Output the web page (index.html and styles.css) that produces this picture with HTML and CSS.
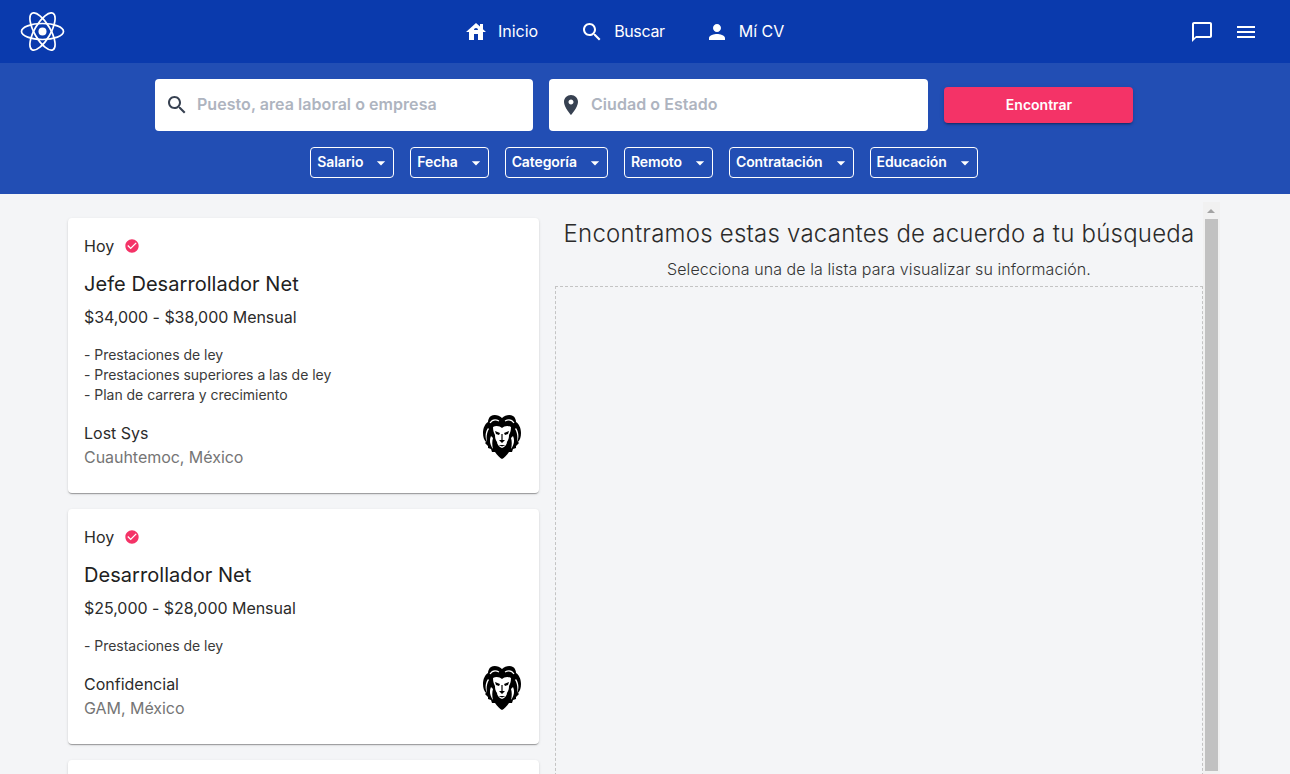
FILE: index.html
```html
<!DOCTYPE html>
<html lang="es">
<head>
<meta charset="UTF-8">
<title>Vacantes</title>
<link rel="stylesheet" href="styles.css">
</head>
<body>
<svg class="defs" width="0" height="0">
  <symbol id="lion" viewBox="0 0 38 45">
    <path fill="#000" d="M19 4C16 1 11 0 8 2 6 3 5 6 5 8 2 10 0 14 0 19c0 4 1 7 3 9l-1 1 3 3 0 2 3 1 1 3 3 0c2 3 5 6 7 7 2-1 5-4 7-7l3 0 1-3 3-1 0-2 3-3-1-1c2-2 3-5 3-9 0-5-2-9-5-11 0-2-1-5-3-6-3-2-8-1-11 2z"/>
    <path fill="#fff" d="M10 13c3-2 7-1 9 1 2-2 6-3 9-1 0 4-1 6-2 8 0 4-1 5-2 7 0 2-2 5-5 6-3-1-5-4-5-6-1-2-2-3-2-7-1-2-2-4-2-8z"/>
    <path fill="#000" d="M12 17l5 2-1 2-3-1zM26 17l-5 2 1 2 3-1zM16 26h6l-3 3zM18.400 20h1.200v6h-1.200zM15.500 31h7l-3.500 1.500z"/>
    <path fill="none" stroke="#fff" stroke-width="1.200" d="M7 9c2-3 5-4 9-2M31 9c-2-3-5-4-9-2"/>
    <path fill="#fff" d="M5 14C2 18 2 24 4 28 3 23 4 18 6 15zM33 14c3 4 3 10 1 14 1-5 0-10-2-13zM8 22c-2 4-1 9 2 13-1-4-1-8 0-11zM30 22c2 4 1 9-2 13 1-4 1-8 0-11z"/>
  </symbol>
</svg>

<header class="topbar">
  <svg class="logo" viewBox="0 0 46 40" width="46" height="40">
    <g fill="none" stroke="#fff" stroke-width="1.700">
      <ellipse cx="22.500" cy="19.500" rx="21" ry="8"/>
      <ellipse cx="22.500" cy="19.500" rx="21" ry="8" transform="rotate(60 22.500 19.500)"/>
      <ellipse cx="22.500" cy="19.500" rx="21" ry="8" transform="rotate(120 22.500 19.500)"/>
    </g>
    <circle cx="22.500" cy="19.500" r="4" fill="#fff"/>
  </svg>
  <nav class="nav">
    <a class="nav-item">
      <svg viewBox="0 0 24 24"><path d="M19 9.300V4h-3v2.600L12 3 2 12h3v8h5v-6h4v6h5v-8h3l-3-2.700zm-9 .7c0-1.100.9-2 2-2s2 .9 2 2h-4z"/></svg>
      <span>Inicio</span>
    </a>
    <a class="nav-item nav-search">
      <svg viewBox="0 0 24 24"><path d="M15.500 14h-.79l-.28-.27C15.410 12.590 16 11.110 16 9.500 16 5.910 13.090 3 9.500 3S3 5.910 3 9.500 5.910 16 9.500 16c1.610 0 3.090-.59 4.230-1.570l.27.28v.79l5 4.990L20.490 19l-4.990-5zm-6 0C7.010 14 5 11.990 5 9.500S7.010 5 9.500 5 14 7.010 14 9.500 11.990 14 9.500 14z"/></svg>
      <span>Buscar</span>
    </a>
    <a class="nav-item">
      <svg viewBox="0 0 24 24"><path d="M12 12c2.210 0 4-1.790 4-4s-1.790-4-4-4-4 1.790-4 4 1.790 4 4 4zm0 2c-2.670 0-8 1.340-8 4v2h16v-2c0-2.660-5.330-4-8-4z"/></svg>
      <span>Mí CV</span>
    </a>
  </nav>
  <div class="actions">
    <svg viewBox="0 0 24 24"><path d="M20 2H4c-1.100 0-2 .9-2 2v18l4-4h14c1.100 0 2-.9 2-2V4c0-1.100-.9-2-2-2zm0 14H6l-2 2V4h16v12z"/></svg>
    <svg viewBox="0 0 24 24"><path d="M3 18h18v-2H3v2zm0-5h18v-2H3v2zm0-7v2h18V6H3z"/></svg>
  </div>
</header>

<section class="search">
  <div class="search-row">
    <div class="field">
      <svg viewBox="0 0 24 24"><path d="M15.500 14h-.79l-.28-.27C15.410 12.590 16 11.110 16 9.500 16 5.910 13.090 3 9.500 3S3 5.910 3 9.500 5.910 16 9.500 16c1.610 0 3.090-.59 4.230-1.570l.27.28v.79l5 4.990L20.490 19l-4.990-5zm-6 0C7.010 14 5 11.990 5 9.500S7.010 5 9.500 5 14 7.010 14 9.500 11.990 14 9.500 14z"/></svg>
      <span>Puesto, area laboral o empresa</span>
    </div>
    <div class="field">
      <svg viewBox="0 0 24 24"><path d="M12 2C8.130 2 5 5.130 5 9c0 5.250 7 13 7 13s7-7.750 7-13c0-3.870-3.130-7-7-7zm0 9.500c-1.380 0-2.500-1.120-2.500-2.500s1.120-2.500 2.500-2.500 2.500 1.120 2.500 2.500-1.120 2.500-2.500 2.500z"/></svg>
      <span>Ciudad o Estado</span>
    </div>
    <button class="find">Encontrar</button>
  </div>
  <div class="filters">
    <div class="filter"><span>Salario</span><svg viewBox="0 0 24 24"><path d="M7 10l5 5 5-5z"/></svg></div>
    <div class="filter"><span>Fecha</span><svg viewBox="0 0 24 24"><path d="M7 10l5 5 5-5z"/></svg></div>
    <div class="filter"><span>Categoría</span><svg viewBox="0 0 24 24"><path d="M7 10l5 5 5-5z"/></svg></div>
    <div class="filter"><span>Remoto</span><svg viewBox="0 0 24 24"><path d="M7 10l5 5 5-5z"/></svg></div>
    <div class="filter"><span>Contratación</span><svg viewBox="0 0 24 24"><path d="M7 10l5 5 5-5z"/></svg></div>
    <div class="filter"><span>Educación</span><svg viewBox="0 0 24 24"><path d="M7 10l5 5 5-5z"/></svg></div>
  </div>
</section>

<main class="main">
  <div class="list">
    <article class="card">
      <div class="when">Hoy
        <svg viewBox="0 0 24 24"><path d="M12 2C6.480 2 2 6.480 2 12s4.480 10 10 10 10-4.480 10-10S17.520 2 12 2zm-2 15l-5-5 1.410-1.410L10 14.170l7.590-7.590L19 8l-9 9z"/></svg>
      </div>
      <h2 class="job">Jefe Desarrollador Net</h2>
      <div class="pay">$34,000 - $38,000 Mensual</div>
      <ul class="perks">
        <li>- Prestaciones de ley</li>
        <li>- Prestaciones superiores a las de ley</li>
        <li>- Plan de carrera y crecimiento</li>
      </ul>
      <div class="foot">
        <div>
          <div class="company">Lost Sys</div>
          <div class="place">Cuauhtemoc, México</div>
        </div>
        <svg class="lion"><use href="#lion"/></svg>
      </div>
    </article>
    <article class="card">
      <div class="when">Hoy
        <svg viewBox="0 0 24 24"><path d="M12 2C6.480 2 2 6.480 2 12s4.480 10 10 10 10-4.480 10-10S17.520 2 12 2zm-2 15l-5-5 1.410-1.410L10 14.170l7.590-7.590L19 8l-9 9z"/></svg>
      </div>
      <h2 class="job">Desarrollador Net</h2>
      <div class="pay">$25,000 - $28,000 Mensual</div>
      <ul class="perks">
        <li>- Prestaciones de ley</li>
      </ul>
      <div class="foot">
        <div>
          <div class="company">Confidencial</div>
          <div class="place">GAM, México</div>
        </div>
        <svg class="lion"><use href="#lion"/></svg>
      </div>
    </article>
    <article class="card card-cut"></article>
  </div>

  <div class="panel">
    <div class="detail">
      <h1 class="detail-title">Encontramos estas vacantes de acuerdo a tu búsqueda</h1>
      <p class="detail-sub">Selecciona una de la lista para visualizar su información.</p>
      <div class="detail-box"></div>
    </div>
    <div class="scrollbar">
      <div class="scroll-up"></div>
      <div class="scroll-thumb"></div>
    </div>
  </div>
</main>
</body>
</html>
```

FILE: styles.css
```css
* {
  box-sizing: border-box;
}

html, body {
  height: 774px;
  overflow: hidden;
}

body {
  margin: 0;
  background: #f4f5f7;
  font-family: Inter, "Liberation Sans", sans-serif;
  color: #2b2b2b;
}

.defs {
  display: block;
}

/* top bar */
.topbar {
  display: flex;
  align-items: center;
  height: 63px;
  padding: 0 32px 0 20px;
  background: #0a3aad;
  color: #fff;
}

.logo {
  flex: none;
}

.nav {
  display: flex;
  gap: 40px;
  margin-left: 398px;
}

.nav-item {
  display: flex;
  align-items: center;
  gap: 10px;
  font-size: 16px;
}

.nav-item span {
  padding-bottom: 2px;
  letter-spacing: -.02px;
}

.nav-search {
  margin-left: 2px;
}

.nav-item.nav-search span {
  letter-spacing: -.35px;
}

.nav-item svg {
  width: 24px;
  height: 24px;
  fill: #fff;
}

.actions {
  display: flex;
  gap: 20px;
  margin-left: auto;
}

.actions svg {
  width: 24px;
  height: 24px;
  fill: #fff;
}

/* search band */
.search {
  height: 131px;
  padding-top: 16px;
  background: #224eb4;
}

.search-row {
  display: grid;
  grid-template-columns: 378px 379px 189px;
  align-items: center;
  gap: 16px;
  padding-left: 155px;
}

.field {
  display: flex;
  align-items: center;
  gap: 8px;
  height: 52px;
  padding-left: 10px;
  background: #fff;
  border-radius: 4px;
  font-size: 16px;
  font-weight: 600;
  color: #aeb4bf;
}

.field span {
  padding-bottom: 2px;
  letter-spacing: .05px;
}

.field svg {
  width: 24px;
  height: 24px;
  fill: #374151;
}

.find {
  height: 36px;
  padding: 0 0 2px 1px;
  border: 0;
  border-radius: 4px;
  background: #f43367;
  color: #fff;
  font-family: inherit;
  font-size: 14px;
  font-weight: 600;
  box-shadow: 0 3px 1px -2px rgba(0,0,0,.2), 0 2px 2px rgba(0,0,0,.14), 0 1px 5px rgba(0,0,0,.12);
}

.filters {
  display: flex;
  justify-content: center;
  gap: 16px;
  margin-top: 16px;
  padding-right: 2px;
}

.filter {
  display: flex;
  align-items: center;
  gap: 8px;
  height: 31px;
  padding: 0 2px 0 6px;
  border: 1px solid #fff;
  border-radius: 4px;
  color: #fff;
  font-size: 14px;
  font-weight: 600;
}

.filter span {
  padding-bottom: 2px;
  letter-spacing: -.1px;
}

.filter svg {
  width: 20px;
  height: 20px;
  fill: #fff;
}

/* results */
.main {
  display: flex;
  gap: 16px;
  padding: 8px 0 0 68px;
}

.list {
  display: flex;
  flex-direction: column;
  gap: 16px;
  flex: none;
  width: 471px;
  padding-top: 16px;
}

.card {
  padding: 16px 16px 24px;
  background: #fff;
  border-radius: 4px;
  box-shadow: 0 2px 1px -1px rgba(0,0,0,.2), 0 1px 1px rgba(0,0,0,.14), 0 1px 3px rgba(0,0,0,.12);
}

.card-cut {
  height: 235px;
}

.when {
  display: flex;
  align-items: center;
  gap: 10px;
  font-size: 16px;
  line-height: 24px;
}

.when svg {
  width: 16px;
  height: 16px;
  fill: #f43367;
}

.job {
  margin: 12px 0 0;
  font-size: 20px;
  font-weight: 400;
  line-height: 28px;
  letter-spacing: .05px;
  color: #212121;
}

.pay {
  margin-top: 7px;
  font-size: 16px;
  line-height: 24px;
  letter-spacing: -.04px;
}

.perks {
  margin: 16px 0 0;
  padding: 0;
  list-style: none;
  font-size: 14px;
  line-height: 20px;
  letter-spacing: -.03px;
  color: #3a3a3a;
}

.foot {
  display: flex;
  justify-content: space-between;
  margin-top: 16px;
}

.company {
  font-size: 16px;
  line-height: 24px;
}

.place {
  font-size: 16px;
  line-height: 24px;
  letter-spacing: -.04px;
  color: #757575;
}

.lion {
  width: 38px;
  height: 45px;
  margin: -7px 2px 10px 0;
}

/* detail panel */
.panel {
  display: flex;
  flex: none;
  width: 665px;
  height: 572px;
}

.detail {
  flex: 1;
  padding-top: 16px;
}

.detail-title {
  margin: 0;
  font-size: 24px;
  font-weight: 300;
  line-height: 32px;
  letter-spacing: .23px;
  text-align: center;
  color: #2b2b2b;
}

.detail-sub {
  margin: 9px 0 0;
  font-size: 16px;
  font-weight: 300;
  line-height: 20px;
  letter-spacing: .08px;
  text-align: center;
  color: #333;
}

.detail-box {
  height: 500px;
  margin-top: 7px;
  border: 1px dashed #c4c4c4;
}

.scrollbar {
  flex: none;
  width: 17px;
  background: #f1f1f1;
}

.scroll-up {
  height: 17px;
  padding: 7px 0 0 4px;
}

.scroll-up::before {
  content: "";
  display: block;
  width: 0;
  height: 0;
  border: 4px solid transparent;
  border-top: 0;
  border-bottom-color: #a3a3a3;
}

.scroll-thumb {
  height: 552px;
  margin: 0 2px;
  background: #c1c1c1;
}
```
